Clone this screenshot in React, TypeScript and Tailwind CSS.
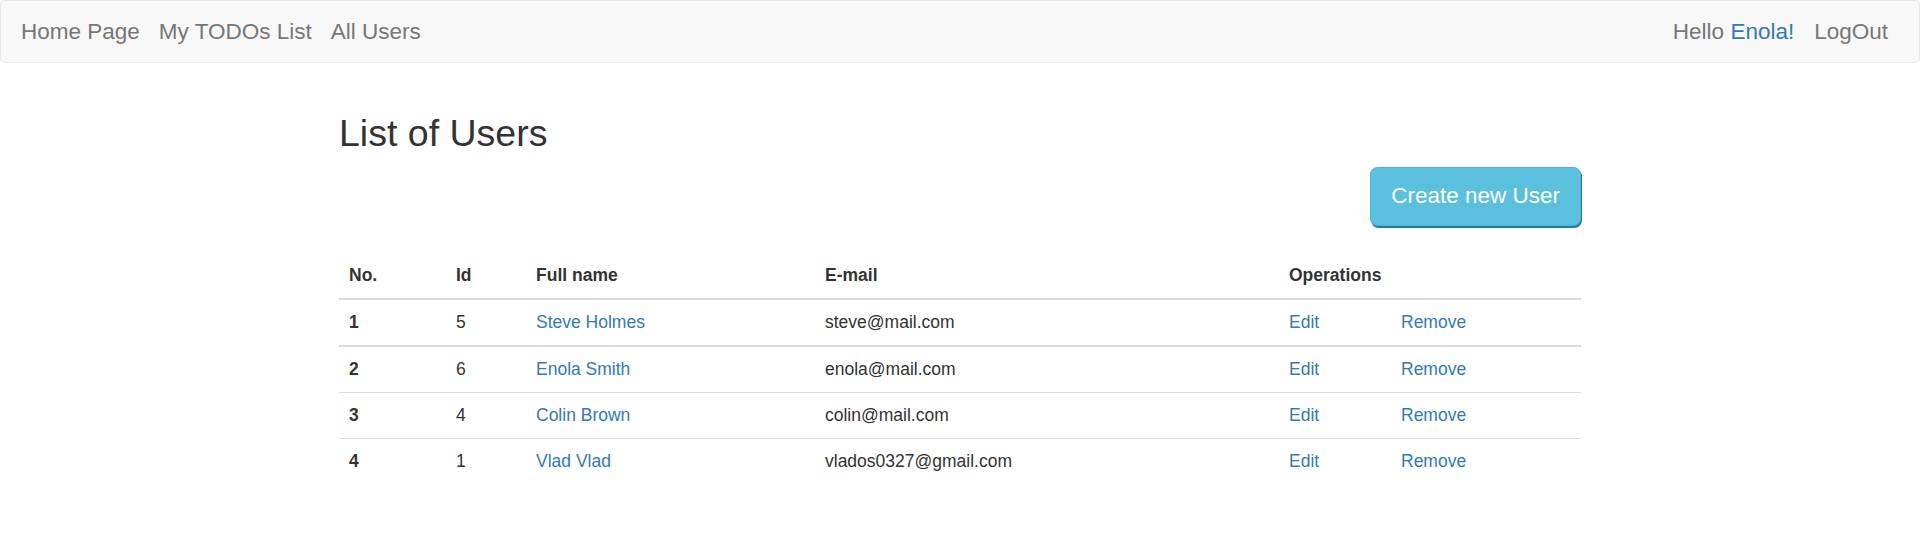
import React from 'react';

const users = [
  { id: 5, name: 'Steve Holmes', email: 'steve@mail.com' },
  { id: 6, name: 'Enola Smith', email: 'enola@mail.com' },
  { id: 4, name: 'Colin Brown', email: 'colin@mail.com' },
  { id: 1, name: 'Vlad Vlad', email: 'vlados0327@gmail.com' },
];

const Nav: React.FC = () => (
  <nav className="flex h-[63px] items-center justify-between rounded-[5px] border border-[#e7e7e7] bg-[#f8f8f8] pl-[20px] pr-[31px] text-[22.5px] leading-[25px] text-[#777]">
    <div className="flex items-center gap-[19px]">
      <a href="#">Home Page</a>
      <a href="#">My TODOs List</a>
      <a href="#">All Users</a>
    </div>
    <div className="flex items-center gap-[20px]">
      <span>
        Hello <a href="#" className="text-[#337ab7]">Enola!</a>
      </span>
      <a href="#">LogOut</a>
    </div>
  </nav>
);

const App: React.FC = () => {
  return (
    <div className="min-h-screen bg-white font-['Liberation_Sans',Arial,sans-serif] text-[17.5px] leading-[25px] text-[#333]">
      <Nav />
      <main className="mx-auto w-[1242px] pt-[50px]">
        <h2 className="mb-[12.5px] text-[37.5px] leading-[41.25px] font-normal">List of Users</h2>
        <div className="flex justify-end">
          <button className="h-[59px] rounded-[7.5px] border border-[#46b8da] bg-[#5bc0de] px-[20px] text-[22.5px] leading-[30px] text-white shadow-[1px_2px_0_#2b7b91]">
            Create new User
          </button>
        </div>
        <table className="mt-[27px] w-full table-fixed border-collapse text-left">
          <colgroup>
            <col className="w-[107px]" />
            <col className="w-[80px]" />
            <col className="w-[289px]" />
            <col className="w-[464px]" />
            <col className="w-[112px]" />
            <col />
          </colgroup>
          <thead>
            <tr className="border-b-2 border-[#ddd]">
              <th className="p-[10px] font-bold">No.</th>
              <th className="p-[10px] font-bold">Id</th>
              <th className="p-[10px] font-bold">Full name</th>
              <th className="p-[10px] font-bold">E-mail</th>
              <th colSpan={2} className="p-[10px] font-bold">Operations</th>
            </tr>
          </thead>
          <tbody>
            {users.map((u, idx) => (
              <tr key={u.id} className={idx === 0 ? 'border-b-2 border-[#ddd]' : idx < users.length - 1 ? 'border-b border-[#ddd]' : ''}>
                <th className="p-[10px] font-bold">{idx + 1}</th>
                <td className="p-[10px]">{u.id}</td>
                <td className="p-[10px]">
                  <a href="#" className="text-[#337ab7]">{u.name}</a>
                </td>
                <td className="p-[10px]">{u.email}</td>
                <td className="p-[10px]">
                  <a href="#" className="text-[#337ab7]">Edit</a>
                </td>
                <td className="p-[10px]">
                  <a href="#" className="text-[#337ab7]">Remove</a>
                </td>
              </tr>
            ))}
          </tbody>
        </table>
      </main>
    </div>
  );
};

export default App;
